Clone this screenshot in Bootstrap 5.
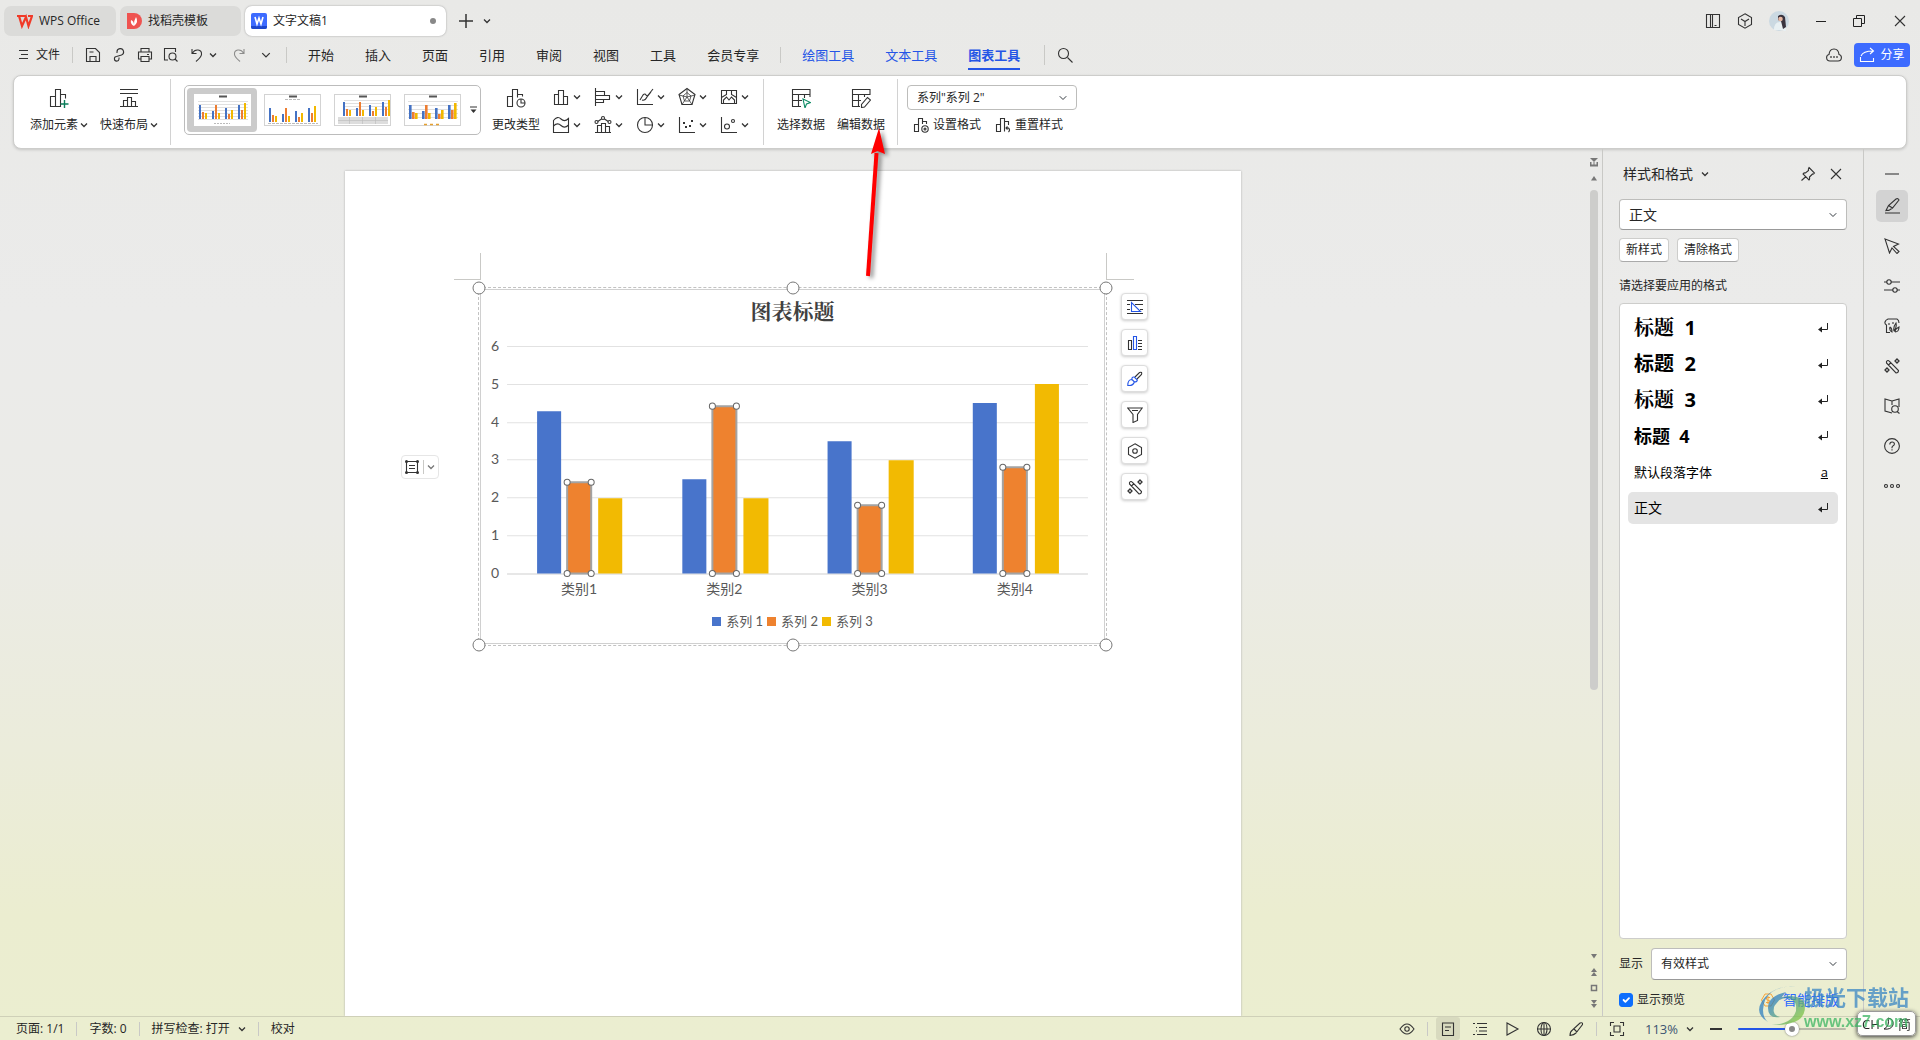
<!DOCTYPE html>
<html lang="zh-CN">
<head>
<meta charset="utf-8">
<meta name="viewport" content="width=device-width, initial-scale=1">
<title>文字文稿1 - WPS Office</title>
<link href="https://cdn.jsdelivr.net/npm/bootstrap@5.3.0/dist/css/bootstrap.min.css" rel="stylesheet">
<script src="https://cdn.jsdelivr.net/npm/bootstrap@5.3.0/dist/js/bootstrap.bundle.min.js"></script>
<style>
:root{--ui:"Open Sans","Noto Sans CJK SC",sans-serif;--ink:#262626;--line:#c9c9c6;--blue:#2455e6}
body{font:12px/16px var(--ui);color:var(--ink);background:linear-gradient(#e9e9e7 0,#ebebea 30%,#ebebe7 50%,#ebecdb 72%,#ebedd0 88%,#ebeed0 100%) fixed}
svg{display:block;flex:none}
.ic{width:16px;height:16px;fill:none;stroke:#333;stroke-width:1.1}
.ic20{width:20px;height:20px}
.ch{width:8px;height:8px;fill:none;stroke:#333;stroke-width:1.3}
.ch10{width:10px;height:10px;stroke-width:1}
.ret{width:10px;height:10px;fill:none;stroke:#222}
.flat{padding:0;border:0;background:none;color:inherit;font:inherit;display:flex;align-items:center}
.flat:hover{color:inherit}
.vr-line{width:1px;height:16px;background:var(--line);flex:none}
.vr-line.tall{height:20px}
.vr-line.short{height:14px}

.doc-tab{height:30px;border-radius:7px;background:#dbdbd9}
.doc-tab.active{background:#fff;box-shadow:0 0 2px #999}
.tab-home{width:112px;padding-left:13px;gap:6px}
.tab-tpl{width:121px;padding-left:6px;gap:6px}
.tab-doc{width:201px;padding:0 10px 0 6px;gap:6px}
.dirty{width:6px;height:6px;border-radius:50%;background:#888}
.titlebar{height:36px;padding:6px 12px 0 4px;gap:4px}
.new-tab{margin-left:8px;gap:9px}
.win{gap:27px}
.menubar{height:38px;padding:0 10px 0 18px}
.menubar .nav-link{padding:10px 0;font-size:13px;line-height:18px;color:var(--ink);position:relative}
.menubar .tool{color:var(--blue)}
.menubar .nav-link.active{font-weight:700}
.menubar .nav-link.active::after{content:"";position:absolute;left:0;right:0;bottom:4px;height:2px;background:var(--blue)}
.menus{gap:31px}
.quick{gap:10px;margin-left:12px}
.file-end{margin-left:12px}
.quick-end{margin:0 21px 0 15px}
.menu-split{margin:0 21px}
.cloud{margin-right:12px}
.share{width:56px;height:24px;border-radius:4px;background:#3d6bff;color:#fff;gap:5px;justify-content:center}
.share:hover{color:#fff}
.share .ic{stroke:#fff}

.ribbon{margin:1px 13px 0;height:74px;background:#fff;border:1px solid #cdcdcb;border-radius:8px;box-shadow:0 1px 3px rgba(0,0,0,.16)}
.rgroup{margin:3px 0;border-right:1px solid #d2d2d2}
.rgroup.open-end{border:0;padding-left:9px}
.g-elem{gap:12px;padding:0 12px 0 16px}
.g-type{gap:11px;padding:0 14px 0 13px}
.g-data{gap:12px;padding:0 12px 0 13px}
.g-fmt{gap:14px;margin:7px 0 0 6px}
.big{flex-direction:column;gap:9px;margin-top:9px;height:45px;white-space:nowrap}
.big span{gap:2px}
.gallery{width:297px;height:50px;margin-top:6px;padding:2px 1px 2px 2px;border:1px solid #bcbcbc;border-radius:5px}
.gallery .pick{width:70px;height:44px;border-radius:4px;justify-content:center}
.gallery .pick.on{background:#cbcbcb}
.thumb{width:57px;height:32px;background:#fff}
.kinds{display:grid;grid-template-columns:repeat(5,30px);column-gap:12px;row-gap:8px;margin-top:8px;align-content:start}
.kinds .flat{gap:2px}
.form-select{font:12px/16px var(--ui);color:var(--ink);border-color:#bdbdbb;border-radius:4px;background-size:10px 8px;background-position:right 8px center;padding:0 24px 0 9px}
.sel-series{width:170px;height:25px;margin-top:6px}

.workspace{min-height:0}
.paper{width:896px;max-width:100%;margin:22px auto 0;padding:116px 134px 0 133px;background:#fff;box-shadow:0 0 2px #aaa;position:relative}
.crop{position:absolute;top:82px;width:28px;height:27px;border-bottom:1px solid var(--line)}
.crop.l{left:109px;width:27px;border-right:1px solid var(--line)}
.crop.r{right:107px;border-left:1px solid var(--line)}
.chart{position:relative;border:1px dashed #c2c2c2;padding:1px;height:359px}
.chart-in{border:1px solid #d0d0d0;height:100%;padding-top:9px}
.chart h2{font:700 21px/27px "Liberation Serif","Noto Serif CJK SC","Noto Sans CJK SC",serif;color:#404040;margin:0;text-align:center}
.chart text{font:14px "Lato","Noto Sans CJK SC",sans-serif;fill:#595959}
.legend{margin:12px 0 0;gap:4px;font:13px/16px "Lato","Noto Sans CJK SC",sans-serif;color:#595959}
.sw{width:9px;height:9px;margin-right:5px}
.s1{background:#4874cb}.s2{background:#ee822f}.s3{background:#f2ba02}
.knob{position:absolute;width:13px;height:13px;border:1px solid #777;border-radius:50%;background:#fff;transform:translate(-50%,-50%)}
.side-tools{position:absolute;left:776px;top:122px;gap:9px}
.side-tools .flat{width:27px;height:27px;border-radius:4px;background:#fff;justify-content:center;border:1px solid #ddd;box-shadow:0 1px 3px rgba(0,0,0,.2)}
.wrap-tool{position:absolute;left:56px;top:284px;width:38px;height:24px;border:1px solid #e6e6e6;border-radius:4px;gap:3px;padding-left:2px}
.wrap-tool .ch{stroke:#777}
.arrow{position:absolute;left:860px;top:124px;width:40px;height:162px;filter:drop-shadow(3px 2px 2px rgba(0,0,0,.45));pointer-events:none}

.scroller{width:16px;padding:5px 0 4px}
.scroller .ic{stroke:none;fill:#777}
.scroller .ic .ring{fill:none;stroke:#777;stroke-width:1.5}
.track{padding-top:4px;width:8px}
.grip{height:66%;border-radius:4px;background:#cdcdcb}
.panel{width:262px;border:solid var(--line);border-width:0 1px;padding:0 16px}
.panel-head{height:50px;font-size:14px;padding:0 3px 0 4px}
.style-now{height:31px;font-size:14px;padding-left:9px;border-bottom-color:#999}
.small-btn{height:24px;padding:0 6px;background:#fff;border:1px solid #cdcdcb;border-bottom-color:#aaa;border-radius:4px}
.styles{background:#fff;border:1px solid #cdcdcb;border-radius:4px;padding:8px;gap:4px;margin:9px 0 0}
.style-row{height:32px;padding:0 10px 0 6px;border-radius:5px;color:#000;font-size:20px;line-height:32px;font-weight:700;width:100%;justify-content:space-between;white-space:pre}
.style-row.h4row{font-size:18px}
.style-row.serif{font-family:"Open Sans","Noto Serif CJK SC","Noto Sans CJK SC",sans-serif}
.style-row.plain{font-weight:400;font-size:13px}
.style-row.picked{background:#e4e4e4;font-weight:400;font-size:14px}
.show-row{margin-top:9px}
.pv-row{margin:12px 0 8px}
.smart{color:#2f6bff;font-size:14px}
.sel-show{height:32px;border-bottom-color:#999}
.form-check-input{width:14px;height:14px;margin:0;border-radius:3px}
.rail{width:56px;padding-top:17px;gap:8px}
.rail .flat{width:32px;height:32px;justify-content:center;border-radius:5px}
.rail .dash{height:16px}
.rail .on{background:#d3d3d3}

.status{height:24px;border-top:1px solid #cfd0b8;padding:0 74px 0 16px}
.status .box{width:24px;height:23px;justify-content:center}
.status .on{background:#d8dabf;border-radius:3px}
.counts{gap:12px}
.zoom-txt{font-size:13px;color:#3c5572}
.form-range{width:108px;height:12px}
.form-range::-webkit-slider-runnable-track{height:2px;background:linear-gradient(90deg,var(--blue) 50%,#b9b9a8 50%)}
.form-range::-webkit-slider-thumb{width:14px;height:14px;margin-top:-6px;background:#888;border:4px solid #fff;box-shadow:0 0 2px #666}
.stamp{position:fixed;right:6px;bottom:4px;width:158px;height:60px;pointer-events:none;overflow:visible}
.ime{position:fixed;right:4px;bottom:4px;width:59px;height:25px;border-radius:5px;background:rgba(255,255,255,.92);border:1px solid #999;box-shadow:0 1px 4px #333;font-size:13px;gap:3px}
</style>
</head>
<body class="vh-100 d-flex flex-column overflow-hidden">

<svg width="0" height="0" class="position-absolute" aria-hidden="true">
  <symbol id="down" viewBox="0 0 8 8"><path d="M1 2.500 4 5.500 7 2.500"/></symbol>
  <symbol id="save" viewBox="0 0 16 16"><path d="M1.500 1.500h9l4 4v9h-13zM5 14.500v-5h6v5M4.500 5h4"/></symbol>
  <symbol id="link" viewBox="0 0 16 16"><path d="M6 6V5a3.300 3.300 0 1 1 4.500 3L5.500 9.500a2.300 2.300 0 1 0 2.500 2.500v-1.500"/></symbol>
  <symbol id="print" viewBox="0 0 16 16"><path d="M4 5V1.500h8V5M4 12H1.500V5h13v7H12M4 9.500h8v5H4zM10 7.500h2"/></symbol>
  <symbol id="preview" viewBox="0 0 16 16"><path d="M5 13H1.500V1.500h11V5M14.500 14.500 12 12"/><circle cx="9.500" cy="9.500" r="3.500"/></symbol>
  <symbol id="undo" viewBox="0 0 16 16"><path d="M3 2v4.500h4.500M3.500 6C6 1.500 13 2 12.500 7.500 12.200 10.500 9 12.500 7 14.500"/></symbol>
  <symbol id="redo" viewBox="0 0 16 16"><path d="M13 2v4.500H8.500M12.500 6C10 1.500 3 2 3.500 7.500 3.800 10.500 7 12.500 9 14.500"/></symbol>
  <symbol id="search" viewBox="0 0 16 16"><circle cx="6.500" cy="6.500" r="5"/><path d="m10.500 10.500 5 5"/></symbol>
  <symbol id="x" viewBox="0 0 16 16"><path d="M3 3l10 10M13 3 3 13"/></symbol>
  <symbol id="add" viewBox="0 0 20 20"><path d="M6.500 8.500h-5v10h5zM6.500 18.500v-17h5v17zM11.500 6.500h5v4"/><path d="M15.500 12v8M11.500 16h8" stroke="#0a7d5a" stroke-width="1.400"/></symbol>
  <symbol id="quick" viewBox="0 0 20 20"><path d="M1 1.500h18M1 5.500h18M1 18.500h18M4.500 18.500v-6h4M8.500 18.500v-9h4v9M12.500 13.500h4v5"/></symbol>
  <symbol id="change" viewBox="0 0 20 20"><path d="M6.500 8.500h-5v10h5zM6.500 18.500v-17h5v8M11.500 6.500h5v2"/><circle cx="15" cy="15" r="4"/><path d="M15 11v4h4"/></symbol>
  <symbol id="k-col" viewBox="0 0 20 20"><path d="M7.500 7.500h-4v10h13v-8h-4M7.500 17.500v-14h5v14"/></symbol>
  <symbol id="k-bar" viewBox="0 0 20 20"><path d="M2.500 1v18M2.500 4.500h9v4M2.500 8.500h14v4h-14M10.500 12.500v3h-8"/></symbol>
  <symbol id="k-line" viewBox="0 0 20 20"><path d="M2.500 2v15.500H18M5 13l3-5q2-2 3 0t3-1l4-5M7 13q3 1 5-3l4-5"/></symbol>
  <symbol id="k-radar" viewBox="0 0 20 20"><path d="m10 1.500 8 6-3 10H5l-3-10z"/><path d="M10 2v8M2 8l8 2 8-2M5 17.500l5-7.500 5 7.500M10 5.500 14 9l-1.500 5h-5L6 9z" stroke-width=".8"/></symbol>
  <symbol id="k-map" viewBox="0 0 20 20"><path d="M2.500 3.500h15v13h-15zM7.500 3.500v4l-5 3M12.500 3.500v4l5 3M4.500 16v-3l3-3 2.500 3 2.500-3 3 3v3"/></symbol>
  <symbol id="k-area" viewBox="0 0 20 20"><path d="M2.500 5.500q4-5 7.500-1.500t7.500-.5v14h-15zM2.500 11q4-4 7.500-.5t7.500-.5"/></symbol>
  <symbol id="k-combo" viewBox="0 0 20 20"><path d="M2 17.500h16M4.500 17.500v-7h4M8.500 17.500v-9h4v9M12.500 11.500h4v6M4 7l6-4 6 4"/><circle cx="10" cy="3" r="1.500" fill="#fff"/><circle cx="3.500" cy="7" r="1.500" fill="#fff"/><circle cx="16.500" cy="7" r="1.500" fill="#fff"/></symbol>
  <symbol id="k-pie" viewBox="0 0 20 20"><circle cx="10" cy="10" r="7.500"/><path d="M10 2.500V10h7.500"/></symbol>
  <symbol id="k-dots" viewBox="0 0 20 20"><path d="M2.500 2v15.500H18"/><path d="M6 8h2M8 12h2M12 11h2M14 6h2" stroke-width="2"/></symbol>
  <symbol id="k-bubble" viewBox="0 0 20 20"><path d="M2.500 2v15.500H18"/><circle cx="8" cy="11.500" r="2.500"/><circle cx="14" cy="6" r="1.500"/></symbol>
  <symbol id="t-sel" viewBox="0 0 20 20"><path d="M19 9V1.500H1.500v17H10M1.500 6.500H19M1.500 12.500H11M7.500 6.500v12M13.500 6.500V10"/><path d="m12 11 7.500 3.500-4 1.500-1.500 4z" stroke="#0a8a63"/></symbol>
  <symbol id="t-edit" viewBox="0 0 20 20"><path d="M19 7V1.500H1.500v17H9M1.500 6.500H19M1.500 12.500H10M7.500 6.500v12M13.500 6.500V9M10.500 19.500v-3l6-7 3 2.500-6 7z"/></symbol>
  <symbol id="fmt" viewBox="0 0 16 16"><path d="M5.500 7.500h-4v7h4zM5.500 14V1.500h4V7M9.500 4.500h4V7"/><circle cx="12" cy="12" r="3.200"/><circle cx="12" cy="12" r="1"/></symbol>
  <symbol id="rst" viewBox="0 0 16 16"><path d="M5.500 7.500h-4v7h4zM5.500 14.500v-13h4v13M9.500 4.500h4V8M11 11h2.500q2 2 0 4M12.500 9.500 11 11l1.500 1.500"/></symbol>
  <symbol id="wrap" viewBox="0 0 16 16"><path d="M0 1.500h16M0 14.500h16M0 5.500h3M8 5.500h8M0 10.500h3M13 10.500h3"/><path d="M4.500 3.500v9h9z" stroke="#2455e6"/></symbol>
  <symbol id="elem" viewBox="0 0 16 16"><path d="M1.500 5.500h3v9h-3zM11 5.500h4M11 8.500h4M11 11.500h4M11 14.500h4"/><path d="M6.500 1.500h3v13h-3z" stroke="#2455e6"/></symbol>
  <symbol id="brush" viewBox="0 0 16 16"><path d="m8 6 4.500-4.500q3-1 2 2L10 8"/><path d="M.8 14.500q0-6 4-6 0-3 2.500-2.500l3 3q0 2-3 2-1 4-6.500 3.500zM5 8.500l2.500 2.500" stroke="#2455e6"/></symbol>
  <symbol id="funnel" viewBox="0 0 16 16"><path d="M.8 1h14.400L10.500 7.500v6L6 15.500v-8zM5 3.500h6"/></symbol>
  <symbol id="hexset" viewBox="0 0 16 16"><path d="m8 .8 6.500 3.700v7L8 15.200 1.500 11.500v-7z"/><circle cx="8" cy="8" r="2.300"/></symbol>
  <symbol id="wand" viewBox="0 0 16 16"><path d="M2.500 3.500q1.500-2 3 0l9 9q0 2.500-2.500 2.500l-9.500-10zM4.500 7l2.500-2.500"/><path d="m13 1 2 2-2 2-2-2zM3 10l2 2-2 2-2-2z" stroke-width="1.300"/></symbol>
  <symbol id="frame" viewBox="0 0 16 16"><path d="M2.500 2.500h11v11h-11zM5 6.500h6M5 9.500h6"/><g fill="#333" stroke="none"><circle cx="2.500" cy="2.500" r="1.500"/><circle cx="13.500" cy="2.500" r="1.500"/><circle cx="2.500" cy="13.500" r="1.500"/><circle cx="13.500" cy="13.500" r="1.500"/></g></symbol>
  <symbol id="pin" viewBox="0 0 16 16"><path d="m9 1.500 5.500 5.500q-1 1.500-2 1l-3 3q.5 2-.5 3L3 8q1-1.500 2.500-1l3-2.500q-.5-1.500.5-3zM6 10.500l-4.500 4"/></symbol>
  <symbol id="pen" viewBox="0 0 16 16"><path d="M1 15h15M2 12.500l2.500-5L12 1q2-1 3 1L8.500 10l-3 2zM4.500 7.500l4 2.500M2 12.500h3.500"/></symbol>
  <symbol id="cursor" viewBox="0 0 16 16"><path d="m1 1 13.500 5-5 2.500 5.500 5-2 2-5-5.500L5.500 15z"/></symbol>
  <symbol id="sliders" viewBox="0 0 16 16"><path d="M0 4h3M7 4h9M0 12h9M13 12h3"/><circle cx="5" cy="4" r="2.200"/><circle cx="11" cy="12" r="2.200"/></symbol>
  <symbol id="beauty" viewBox="0 0 16 16"><path d="M6 14.500H2.500V7Q.5 6 1 4t3-3h9q2 1 2 4M5 5v2M9 4v2M6 9q2 1 2 5-3-1-2-5M10 13q-1-4 2-8 1 5-2 8M11 14q0-3 4-5 0 5-4 5"/></symbol>
  <symbol id="book" viewBox="0 0 16 16"><path d="M8 3 1 1v12l7 2M8 3l7-2v8M8 3v4M15.500 15.500 13.500 14"/><circle cx="11" cy="11" r="3.300"/></symbol>
  <symbol id="help" viewBox="0 0 16 16"><circle cx="8" cy="8" r="7.400"/><path d="M5.800 6.500q0-2.500 2.300-2.500t2.300 2q0 1.200-1.200 1.800T8 9.500v.7M8 11.300v1.200"/></symbol>
  <symbol id="more" viewBox="0 0 16 16"><circle cx="2" cy="8" r="1.500"/><circle cx="8" cy="8" r="1.500"/><circle cx="14" cy="8" r="1.500"/></symbol>
  <symbol id="ret" viewBox="0 0 10 10"><path d="M9.500 0v6.500H2"/><path d="M0 6.500 4 3.500v6z" fill="#222" stroke="none"/></symbol>
  <symbol id="eye" viewBox="0 0 16 16"><path d="M1 8q7-10 14 0-7 10-14 0z"/><circle cx="8" cy="8" r="2.200"/></symbol>
  <symbol id="doc" viewBox="0 0 16 16"><path d="M2.500 2h11v12.500h-11zM5 6h6M5 9.500h4"/></symbol>
  <symbol id="list" viewBox="0 0 16 16"><path d="M1 2.500h2M5 2.500h10M4 6.500h1M7 6.500h8M4 10h1M7 10h8M1 13.500h2M5 13.500h10"/></symbol>
  <symbol id="play" viewBox="0 0 16 16"><path d="M3 2v12l11-6z"/></symbol>
  <symbol id="globe" viewBox="0 0 16 16"><circle cx="8" cy="8" r="6.500"/><ellipse cx="8" cy="8" rx="3" ry="6.500"/><path d="M1.500 8h13M8 1.500v13"/></symbol>
  <symbol id="pencil" viewBox="0 0 16 16"><path d="M2 14.500q0-4 2.500-5.500L12 2q3-1 2.500 1.500L8 12q-2 2-6 2.500zM6 8l3 3"/></symbol>
  <symbol id="fit" viewBox="0 0 16 16"><path d="M1.500 5V1.500H5M11 1.500h3.500V5M14.500 11v3.500H11M5 14.500H1.500V11M5 5h6v6H5z"/></symbol>
  <!-- small four-group column chart shared by the gallery thumbnails -->
  <symbol id="mini" viewBox="0 0 57 32">
    <g fill="#4472c4"><path d="M5 11h2v14H5zM18 17h2v8h-2zM31 14h2v11h-2zM44 11h2v14h-2z"/></g>
    <g fill="#ed7d31"><path d="M8 18h2v7H8zM21 11h2v14h-2zM34 20h2v5h-2zM47 16h2v9h-2z"/></g>
    <g fill="#f2b800"><path d="M11 19h2v6h-2zM24 19h2v6h-2zM37 16h2v9h-2zM50 9h2v16h-2z"/></g>
  </symbol>
</svg>

<header>
  <div class="titlebar d-flex align-items-center">
    <button class="flat doc-tab tab-home"><svg class="ic" viewBox="0 0 16 16"><path d="M0 3h9M2 3l3 10 4-9 2.500 9L15 3h-4" stroke="#f03a28" stroke-width="2.200"/></svg>WPS Office</button>
    <button class="flat doc-tab tab-tpl"><svg width="16" height="16" viewBox="0 0 16 16"><path d="M1 0h7a8 8 0 0 1 0 16H1z" fill="#ef5350"/><path d="M8 13Q4 11 5 7q3 1 3 5 0-5 2-8 3 5-2 9" fill="#fff"/></svg>找稻壳模板</button>
    <button class="flat doc-tab tab-doc active"><svg width="16" height="16" viewBox="0 0 16 16"><rect width="16" height="16" rx="2" fill="#3d6bff"/><path d="M0 13h16v1q0 2-2 2H2q-2 0-2-2z" fill="#1c46cc"/><path d="m4 4 2 7 2-6 2 6 2-7" fill="none" stroke="#fff" stroke-width="1.600"/></svg>文字文稿1<span class="dirty ms-auto"></span></button>
    <button class="flat new-tab" aria-label="新建"><svg class="ic" viewBox="0 0 16 16"><path d="M8 1v14M1 8h14" stroke-width="1.500"/></svg><svg class="ch"><use href="#down"/></svg></button>
    <div class="win d-flex align-items-center ms-auto">
      <div class="d-flex align-items-center gap-3">
        <button class="flat" aria-label="分栏"><svg class="ic" viewBox="0 0 16 16"><path d="M7 1.500H1.500v13H7M5.500 1.500v13M7.500 1.500h7v13h-7zM9.500 12.500h2"/></svg></button>
        <button class="flat" aria-label="应用"><svg class="ic" viewBox="0 0 16 16"><path d="m8 .8 6.500 3.700v7L8 15.200l-6.500-3.700v-7zM4 6l4 2.500L12 6M8 8.500V13"/></svg></button>
        <button class="flat" aria-label="账号"><svg width="20" height="20" viewBox="0 0 20 20"><circle cx="10" cy="10" r="10" fill="#cbd9e2"/><path d="M5 19q0-8 6-8t6 6-3 2z" fill="#e8f0f3"/><path d="M9 5q4-3 7 1l1 10-3 2-2-8-3-1z" fill="#3a343e"/><circle cx="11.500" cy="8" r="2.300" fill="#e9b9a4"/></svg></button>
      </div>
      <button class="flat" aria-label="最小化"><svg width="10" height="10"><path d="M0 5.500h10" stroke="#222"/></svg></button>
      <button class="flat" aria-label="还原"><svg width="12" height="12" fill="none" stroke="#222"><path d="M.5 3.500h8v8h-8zM3.500 3.500v-3h8v8h-3"/></svg></button>
      <button class="flat" aria-label="关闭"><svg class="ic"><use href="#x"/></svg></button>
    </div>
  </div>

  <nav class="menubar d-flex align-items-center">
    <button class="flat gap-2"><svg width="10" height="12" stroke="#333"><path d="M1 1.500h9M3 5.500h7M1 9.500h9"/></svg>文件</button>
    <div class="vr-line file-end"></div>
    <div class="quick d-flex align-items-center">
      <button class="flat" aria-label="保存"><svg class="ic"><use href="#save"/></svg></button>
      <button class="flat" aria-label="链接"><svg class="ic"><use href="#link"/></svg></button>
      <button class="flat" aria-label="打印"><svg class="ic"><use href="#print"/></svg></button>
      <button class="flat" aria-label="打印预览"><svg class="ic"><use href="#preview"/></svg></button>
      <button class="flat gap-1" aria-label="撤销"><svg class="ic"><use href="#undo"/></svg><svg class="ch"><use href="#down"/></svg></button>
      <button class="flat opacity-50 ms-1" aria-label="恢复"><svg class="ic"><use href="#redo"/></svg></button>
      <button class="flat ms-1" aria-label="更多"><svg class="ch ch10"><use href="#down"/></svg></button>
    </div>
    <div class="vr-line quick-end"></div>
    <div class="menus nav flex-nowrap">
      <a class="nav-link" href="#">开始</a><a class="nav-link" href="#">插入</a><a class="nav-link" href="#">页面</a><a class="nav-link" href="#">引用</a><a class="nav-link" href="#">审阅</a><a class="nav-link" href="#">视图</a><a class="nav-link" href="#">工具</a><a class="nav-link" href="#">会员专享</a>
    </div>
    <div class="vr-line menu-split"></div>
    <div class="menus nav flex-nowrap">
      <a class="nav-link tool" href="#">绘图工具</a><a class="nav-link tool" href="#">文本工具</a><a class="nav-link tool active" href="#">图表工具</a>
    </div>
    <div class="vr-line tall ms-4 me-2"></div>
    <button class="flat ms-1" aria-label="搜索"><svg class="ic"><use href="#search"/></svg></button>
    <button class="flat ms-auto cloud" aria-label="云"><svg class="ic" viewBox="0 0 16 16"><path d="M4 14Q.6 14 .6 10.500q0-2.500 2.400-3Q3.500 2 8 2t5 5.500q2.400.500 2.400 3Q15.400 14 12 14z"/><path d="M4.200 10h1.600M7.200 10h1.600M10.200 10h1.600" stroke-width="1.500"/></svg></button>
    <button class="flat share"><svg class="ic" viewBox="0 0 16 16"><path d="M1.500 10v4.500h13V11M2 9q2-5 12-5M11 1l3.500 3L11 7"/></svg>分享</button>
  </nav>

  <section class="ribbon d-flex" aria-label="图表工具">
    <div class="rgroup g-elem d-flex align-items-start">
      <button class="flat big"><svg class="ic ic20"><use href="#add"/></svg><span class="d-flex align-items-center">添加元素<svg class="ch"><use href="#down"/></svg></span></button>
      <button class="flat big"><svg class="ic ic20"><use href="#quick"/></svg><span class="d-flex align-items-center">快速布局<svg class="ch"><use href="#down"/></svg></span></button>
    </div>
    <div class="rgroup g-type d-flex align-items-start">
      <div class="gallery d-flex align-items-center">
        <button class="flat pick on" aria-label="样式 1"><svg class="thumb"><path d="M4 7.500h50M4 10.500h50M4 13.500h50M4 16.500h50M4 19.500h50M4 22.500h50M4 25.500h50" stroke="#e0e0e0"/><path d="M25 2.500h8" stroke="#555" stroke-width="2"/><use href="#mini"/><path d="M20 29.500h16" stroke="#bbb" stroke-dasharray="2 1"/></svg></button>
        <button class="flat pick" aria-label="样式 2"><svg class="thumb"><rect x=".5" y=".5" width="56" height="31" fill="none" stroke="#d3d3d3"/><path d="M4 29.500h50M21 5.500h16" stroke="#bbb" stroke-dasharray="3 1"/><path d="M25 2.500h8" stroke="#555" stroke-width="2"/><use href="#mini" y="3"/></svg></button>
        <button class="flat pick" aria-label="样式 3"><svg class="thumb"><rect x=".5" y=".5" width="56" height="31" fill="none" stroke="#d3d3d3"/><path d="M10 6.500h44M10 9.500h44M10 12.500h44M10 15.500h44" stroke="#e0e0e0"/><path d="M4 23h50v7H4z" fill="#ddd"/><path d="M25 2.500h8" stroke="#555" stroke-width="2"/><use href="#mini" x="4" y="-3"/><path d="M4 26.500h50M15.500 23v7M28.500 23v7M41.500 23v7" stroke="#bbb" stroke-width=".6"/></svg></button>
        <button class="flat pick" aria-label="样式 4"><svg class="thumb"><rect x=".5" y=".5" width="56" height="31" fill="none" stroke="#d3d3d3"/><path d="M4 7.500h50M4 11.500h50M4 15.500h50M4 19.500h50M4 23.500h50" stroke="#e0e0e0"/><path d="M25 2.500h8" stroke="#555" stroke-width="2"/><use href="#mini"/><use href="#mini" x="1" opacity=".6"/><path d="M20 30.500h16" stroke="#e5a030" stroke-width="1.500" stroke-dasharray="3 3"/></svg></button>
        <button class="flat mx-auto" aria-label="更多样式"><svg width="7" height="8"><path d="M0 1h7" stroke="#333"/><path d="M.5 3.500h6l-3 3.500z" fill="#333"/></svg></button>
      </div>
      <button class="flat big"><svg class="ic ic20"><use href="#change"/></svg>更改类型</button>
      <div class="kinds">
        <button class="flat" aria-label="柱形图"><svg class="ic ic20"><use href="#k-col"/></svg><svg class="ch"><use href="#down"/></svg></button>
        <button class="flat" aria-label="条形图"><svg class="ic ic20"><use href="#k-bar"/></svg><svg class="ch"><use href="#down"/></svg></button>
        <button class="flat" aria-label="折线图"><svg class="ic ic20"><use href="#k-line"/></svg><svg class="ch"><use href="#down"/></svg></button>
        <button class="flat" aria-label="雷达图"><svg class="ic ic20"><use href="#k-radar"/></svg><svg class="ch"><use href="#down"/></svg></button>
        <button class="flat" aria-label="地图"><svg class="ic ic20"><use href="#k-map"/></svg><svg class="ch"><use href="#down"/></svg></button>
        <button class="flat" aria-label="面积图"><svg class="ic ic20"><use href="#k-area"/></svg><svg class="ch"><use href="#down"/></svg></button>
        <button class="flat" aria-label="组合图"><svg class="ic ic20"><use href="#k-combo"/></svg><svg class="ch"><use href="#down"/></svg></button>
        <button class="flat" aria-label="饼图"><svg class="ic ic20"><use href="#k-pie"/></svg><svg class="ch"><use href="#down"/></svg></button>
        <button class="flat" aria-label="散点图"><svg class="ic ic20"><use href="#k-dots"/></svg><svg class="ch"><use href="#down"/></svg></button>
        <button class="flat" aria-label="气泡图"><svg class="ic ic20"><use href="#k-bubble"/></svg><svg class="ch"><use href="#down"/></svg></button>
      </div>
    </div>
    <div class="rgroup g-data d-flex align-items-start">
      <button class="flat big"><svg class="ic ic20"><use href="#t-sel"/></svg>选择数据</button>
      <button class="flat big"><svg class="ic ic20"><use href="#t-edit"/></svg>编辑数据</button>
    </div>
    <div class="rgroup open-end">
      <select class="form-select sel-series" aria-label="图表元素"><option>系列"系列 2"</option></select>
      <div class="g-fmt d-flex">
        <button class="flat gap-1"><svg class="ic"><use href="#fmt"/></svg>设置格式</button>
        <button class="flat gap-1"><svg class="ic"><use href="#rst"/></svg>重置样式</button>
      </div>
    </div>
  </section>
</header>

<main class="workspace flex-fill d-flex">
  <div class="flex-fill d-flex overflow-hidden">
    <article class="paper">
      <div class="crop l"></div><div class="crop r"></div>
      <div class="wrap-tool d-flex align-items-center bg-white">
        <button class="flat" aria-label="布局选项"><svg class="ic"><use href="#frame"/></svg></button>
        <div class="vr-line short"></div>
        <svg class="ch"><use href="#down"/></svg>
      </div>
      <figure class="chart m-0">
        <div class="chart-in">
          <h2>图表标题</h2>
          <svg viewBox="0 0 622 275" class="w-100" role="img" aria-label="簇状柱形图">
            <path d="M26 20.500h580M26 58.500h580M26 96.500h580M26 133.500h580M26 171.500h580M26 209.500h580" stroke="#e2e2e2"/>
            <path d="M26 247.500h580" stroke="#d0d0d0"/>
            <g text-anchor="end"><text x="18" y="25">6</text><text x="18" y="63">5</text><text x="18" y="101">4</text><text x="18" y="138">3</text><text x="18" y="176">2</text><text x="18" y="214">1</text><text x="18" y="252">0</text></g>
            <g fill="#4874cb"><path d="M56 85h24v162H56zM201 153h24v94h-24zM346 115h24v132h-24zM491 77h24v170h-24z"/></g>
            <g fill="#f2ba02"><path d="M117 172h24v75h-24zM262 172h25v75h-25zM407 134h25v113h-25zM553 58h24v189h-24z"/></g>
            <g fill="#ee822f" stroke="#a3a3a3" stroke-width="2"><path d="M86 156h24v91H86zM231 80h24v167h-24zM376 179h24v68h-24zM521 141h24v106h-24z"/></g>
            <g fill="#fff" stroke="#666"><circle cx="86" cy="156" r="3"/><circle cx="110" cy="156" r="3"/><circle cx="86" cy="247" r="3"/><circle cx="110" cy="247" r="3"/><circle cx="231" cy="80" r="3"/><circle cx="255" cy="80" r="3"/><circle cx="231" cy="247" r="3"/><circle cx="255" cy="247" r="3"/><circle cx="376" cy="179" r="3"/><circle cx="400" cy="179" r="3"/><circle cx="376" cy="247" r="3"/><circle cx="400" cy="247" r="3"/><circle cx="521" cy="141" r="3"/><circle cx="545" cy="141" r="3"/><circle cx="521" cy="247" r="3"/><circle cx="545" cy="247" r="3"/></g>
            <g text-anchor="middle"><text x="98" y="268">类别1</text><text x="243" y="268">类别2</text><text x="388" y="268">类别3</text><text x="533" y="268">类别4</text></g>
          </svg>
          <ul class="legend list-unstyled d-flex justify-content-center">
            <li class="d-flex align-items-center"><span class="sw s1"></span>系列 1</li>
            <li class="d-flex align-items-center"><span class="sw s2"></span>系列 2</li>
            <li class="d-flex align-items-center"><span class="sw s3"></span>系列 3</li>
          </ul>
        </div>
        <span class="knob start-0 top-0"></span><span class="knob start-50 top-0"></span><span class="knob start-100 top-0"></span>
        <span class="knob start-0 top-100"></span><span class="knob start-50 top-100"></span><span class="knob start-100 top-100"></span>
      </figure>
      <div class="side-tools d-flex flex-column">
        <button class="flat" aria-label="环绕"><svg class="ic"><use href="#wrap"/></svg></button>
        <button class="flat" aria-label="图表元素"><svg class="ic"><use href="#elem"/></svg></button>
        <button class="flat" aria-label="图表样式"><svg class="ic"><use href="#brush"/></svg></button>
        <button class="flat" aria-label="筛选"><svg class="ic"><use href="#funnel"/></svg></button>
        <button class="flat" aria-label="设置"><svg class="ic"><use href="#hexset"/></svg></button>
        <button class="flat" aria-label="美化"><svg class="ic"><use href="#wand"/></svg></button>
      </div>
    </article>
  </div>

  <div class="scroller d-flex flex-column align-items-center" aria-hidden="true">
    <svg class="ic"><path d="M4 4h8L8 8zM4 8h1.500v2.500h2V8h1v2.500h2V8H12v4.500H4z"/></svg>
    <svg class="ic"><path d="M5 10.500h6L8 6z"/></svg>
    <div class="track flex-fill"><div class="grip"></div></div>
    <svg class="ic"><path d="M5 6h6l-3 4.500z"/></svg>
    <svg class="ic"><path d="M5 8h6L8 4zM5 12h6L8 8z"/></svg>
    <svg class="ic"><path class="ring" d="M5.500 5.500h5v5h-5z"/></svg>
    <svg class="ic"><path d="M5 4h6L8 8zM5 8h6l-3 4z"/></svg>
  </div>

  <aside class="panel d-flex flex-column">
    <div class="panel-head d-flex align-items-center">
      <button class="flat gap-2">样式和格式<svg class="ch"><use href="#down"/></svg></button>
      <button class="flat ms-auto me-2" aria-label="固定"><svg class="ic"><use href="#pin"/></svg></button>
      <button class="flat ms-1" aria-label="关闭窗格"><svg class="ic"><use href="#x"/></svg></button>
    </div>
    <select class="form-select style-now" aria-label="当前样式"><option>正文</option></select>
    <div class="d-flex gap-2 mt-2">
      <button class="flat small-btn">新样式</button>
      <button class="flat small-btn">清除格式</button>
    </div>
    <div class="mt-3">请选择要应用的格式</div>
    <div class="styles flex-fill d-flex flex-column">
      <button class="flat style-row serif">标题  1<svg class="ret"><use href="#ret"/></svg></button>
      <button class="flat style-row">标题  2<svg class="ret"><use href="#ret"/></svg></button>
      <button class="flat style-row serif">标题  3<svg class="ret"><use href="#ret"/></svg></button>
      <button class="flat style-row h4row">标题  4<svg class="ret"><use href="#ret"/></svg></button>
      <button class="flat style-row plain">默认段落字体<u>a</u></button>
      <button class="flat style-row picked">正文<svg class="ret"><use href="#ret"/></svg></button>
    </div>
    <div class="show-row d-flex align-items-center gap-2">
      <label class="text-nowrap" for="show">显示</label>
      <select id="show" class="form-select sel-show"><option>有效样式</option></select>
    </div>
    <div class="pv-row d-flex align-items-center">
      <input class="form-check-input" type="checkbox" id="pv" checked><label for="pv" class="ms-1">显示预览</label>
      <button class="flat smart ms-auto gap-2 me-2"><svg width="14" height="14" viewBox="0 0 14 14" fill="none" stroke="#f5a33a"><path d="M4 1h6l3.500 6L10 13H4L.5 7zM9 4.500H6.500q-1.500 0-1 1.500T8 7.500t0 2H5M7 3v8"/></svg>智能排版</button>
    </div>
  </aside>

  <div class="rail d-flex flex-column align-items-center">
    <button class="flat dash" aria-label="收起"><svg width="14" height="2"><path d="M0 1h14" stroke="#888" stroke-width="2"/></svg></button>
    <button class="flat on" aria-label="样式"><svg class="ic"><use href="#pen"/></svg></button>
    <button class="flat" aria-label="选择"><svg class="ic"><use href="#cursor"/></svg></button>
    <button class="flat" aria-label="属性"><svg class="ic"><use href="#sliders"/></svg></button>
    <button class="flat" aria-label="稻壳"><svg class="ic"><use href="#beauty"/></svg></button>
    <button class="flat" aria-label="智能美化"><svg class="ic"><use href="#wand"/></svg></button>
    <button class="flat" aria-label="查阅"><svg class="ic"><use href="#book"/></svg></button>
    <button class="flat" aria-label="帮助"><svg class="ic"><use href="#help"/></svg></button>
    <button class="flat" aria-label="更多"><svg class="ic"><use href="#more"/></svg></button>
  </div>
</main>

<footer class="status d-flex align-items-center">
  <div class="counts d-flex align-items-center">
    <span>页面: 1/1</span><i class="vr-line short"></i><span>字数: 0</span><i class="vr-line short"></i>
    <button class="flat gap-2">拼写检查: 打开<svg class="ch"><use href="#down"/></svg></button><i class="vr-line short"></i><span>校对</span>
  </div>
  <div class="d-flex align-items-center gap-2 ms-auto">
    <button class="flat box" aria-label="护眼"><svg class="ic"><use href="#eye"/></svg></button>
    <i class="vr-line short"></i>
    <button class="flat box on" aria-label="页面视图"><svg class="ic"><use href="#doc"/></svg></button>
    <button class="flat box" aria-label="大纲"><svg class="ic"><use href="#list"/></svg></button>
    <button class="flat box" aria-label="播放"><svg class="ic"><use href="#play"/></svg></button>
    <button class="flat box" aria-label="Web 版式"><svg class="ic"><use href="#globe"/></svg></button>
    <button class="flat box" aria-label="写作模式"><svg class="ic"><use href="#pencil"/></svg></button>
    <i class="vr-line short"></i>
    <button class="flat box" aria-label="最佳显示比例"><svg class="ic"><use href="#fit"/></svg></button>
    <button class="flat gap-2 zoom-txt ms-2">113%<svg class="ch"><use href="#down"/></svg></button>
    <button class="flat mx-2" aria-label="缩小"><svg width="12" height="2"><path d="M0 1h12" stroke="#333" stroke-width="2"/></svg></button>
    <input type="range" class="form-range" aria-label="显示比例" value="50">
  </div>
</footer>

<svg class="arrow" viewBox="0 0 40 162"><path d="M8 152 16.500 29" stroke="red" stroke-width="4"/><path d="M19 4 25 30 17.500 27 11 30z" fill="red"/></svg>

<div class="ime d-flex align-items-center justify-content-center">CH <svg width="12" height="14" viewBox="0 0 12 14" fill="none" stroke="#222"><path d="M5 1q6 1 5 7-2 5-9 4 6-3 4-11z"/></svg>简</div>
<svg class="stamp" viewBox="0 0 158 60">
  <defs><linearGradient id="swirl" x2="1" y2="1"><stop offset=".2" stop-color="#2f7fc0"/><stop offset=".8" stop-color="#7cc24a"/></linearGradient></defs>
  <g opacity=".75" transform="translate(0 8)"><path d="M40 2Q8 2 7 26q0 8 5 12Q-2 30 6 17 16 2 40 2z" fill="#2f7fc0"/><path d="M30 8Q12 12 12 24q0 11 12 9-8-2-6-10 3-9 14-9 10 3 8 13-4 13-24 14 34 1 33-19Q48 12 33 12q-17 1-18 14" fill="url(#swirl)"/></g>
  <text x="48" y="29" font-family="Noto Sans CJK SC,sans-serif" font-weight="700" font-size="21" fill="#3a86c4" opacity=".75">极光下载站</text>
  <text x="48" y="51" font-family="Liberation Sans,sans-serif" font-weight="700" font-size="16" fill="#3cb563" opacity=".75">www.xz7.com</text>
</svg>
</body>
</html>
